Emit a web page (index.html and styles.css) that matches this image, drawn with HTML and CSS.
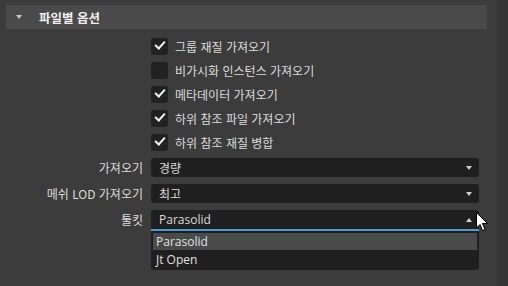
FILE: index.html
```html
<!DOCTYPE html>
<html lang="ko">

<head>
    <meta charset="UTF-8">
    <title>파일별 옵션</title>
    <link rel="stylesheet" href="styles.css">
</head>

<body>
    <div class="panel">
        <div class="section-header">
            <span class="caret"></span>
            <span class="section-title">파일별 옵션</span>
        </div>

        <div class="form">
            <div class="check-row">
                <span class="checkbox checked"></span>
                <span>그룹 재질 가져오기</span>
            </div>
            <div class="check-row">
                <span class="checkbox"></span>
                <span>비가시화 인스턴스 가져오기</span>
            </div>
            <div class="check-row">
                <span class="checkbox checked"></span>
                <span>메타데이터 가져오기</span>
            </div>
            <div class="check-row">
                <span class="checkbox checked"></span>
                <span>하위 참조 파일 가져오기</span>
            </div>
            <div class="check-row">
                <span class="checkbox checked"></span>
                <span>하위 참조 재질 병합</span>
            </div>

            <div class="field-row">
                <label class="field-label">가져오기</label>
                <div class="select">
                    <span>경량</span>
                    <span class="arrow down"></span>
                </div>
            </div>
            <div class="field-row">
                <label class="field-label">메쉬 LOD 가져오기</label>
                <div class="select">
                    <span>최고</span>
                    <span class="arrow down"></span>
                </div>
            </div>
            <div class="field-row">
                <label class="field-label">툴킷</label>
                <div class="select open">
                    <span class="latin">Parasolid</span>
                    <span class="arrow up"></span>
                    <div class="menu">
                        <div class="menu-item active">Parasolid</div>
                        <div class="menu-item">Jt Open</div>
                    </div>
                    <svg class="cursor" width="13" height="20" viewBox="0 0 13 20">
                        <path d="M0.5 0.5 L0.5 16 L4 12.5 L6.5 18.5 L9 17.5 L6.5 11.5 L11.5 11.5 Z" fill="#fff" stroke="#000" stroke-width="1"/>
                    </svg>
                </div>
            </div>
        </div>
    </div>
    <div class="scroll-strip"></div>
</body>

</html>
```

FILE: styles.css
```css
body {
    margin: 0;
    height: 286px;
    background-color: #3c3c3c;
    color: #dcdcdc;
    font-family: "Noto Sans CJK KR", "Noto Sans", sans-serif;
    font-size: 12px;
    display: flex;
    overflow: hidden;
}

.panel {
    width: 497px;
    padding-top: 5px;
}

.scroll-strip {
    flex: 1;
    background-color: #363636;
}

.section-header {
    height: 24px;
    margin-left: 6px;
    width: 481px;
    background-color: #4a4a4a;
    display: flex;
    align-items: center;
}

.caret {
    width: 0;
    height: 0;
    margin-left: 10px;
    margin-right: 17px;
    border-left: 3.5px solid transparent;
    border-right: 3.5px solid transparent;
    border-top: 4px solid #c8c8c8;
}

.section-title {
    color: #f0f0f0;
    font-weight: bold;
    font-size: 12.5px;
}

.form {
    padding-top: 5px;
    display: grid;
    grid-template-columns: 143px 328px;
    column-gap: 8px;
}

.check-row {
    grid-column: 2;
    height: 24px;
    display: flex;
    align-items: center;
    gap: 7px;
}

.checkbox {
    width: 17px;
    height: 17px;
    border-radius: 3px;
    background-color: #222222;
    position: relative;
}

.checkbox.checked::after {
    content: "";
    position: absolute;
    left: 4px;
    top: 3px;
    width: 8px;
    height: 4px;
    border-left: 2.5px solid #f4f4f4;
    border-bottom: 2.5px solid #f4f4f4;
    transform: rotate(-48deg);
    transform-origin: center;
}

.field-row {
    grid-column: 1 / 3;
    display: grid;
    grid-template-columns: 143px 328px;
    column-gap: 8px;
    align-items: start;
    margin-bottom: 7px;
}

.check-row + .field-row {
    margin-top: 4px;
}

.field-label {
    text-align: right;
    height: 19px;
    line-height: 19px;
}

.select {
    height: 19px;
    background-color: #1f1f1f;
    border-radius: 3px;
    display: flex;
    align-items: center;
    justify-content: space-between;
    padding: 0 7px 0 8px;
    position: relative;
}

.select.open {
    border-radius: 3px 3px 0 0;
    border-bottom: 2px solid #4a9fda;
}

.latin {
    font-family: "Open Sans", "Noto Sans", sans-serif;
}

.arrow {
    width: 0;
    height: 0;
    border-left: 3.5px solid transparent;
    border-right: 3.5px solid transparent;
}

.arrow.down {
    border-top: 4px solid #d0d0d0;
}

.arrow.up {
    border-bottom: 4px solid #d0d0d0;
}

.menu {
    position: absolute;
    left: 0;
    right: 0;
    top: 21px;
    background-color: #1f1f1f;
    border-radius: 0 0 3px 3px;
    padding: 2px 2px 1px 2px;
    font-family: "Open Sans", "Noto Sans", sans-serif;
}

.menu-item {
    height: 17px;
    line-height: 17px;
    padding-left: 3px;
    color: #e0e0e0;
}

.menu-item + .menu-item {
    height: 19px;
    line-height: 19px;
}

.menu-item.active {
    background-color: #4a4a4a;
}

.cursor {
    position: absolute;
    left: 325px;
    top: 2px;
}
```
